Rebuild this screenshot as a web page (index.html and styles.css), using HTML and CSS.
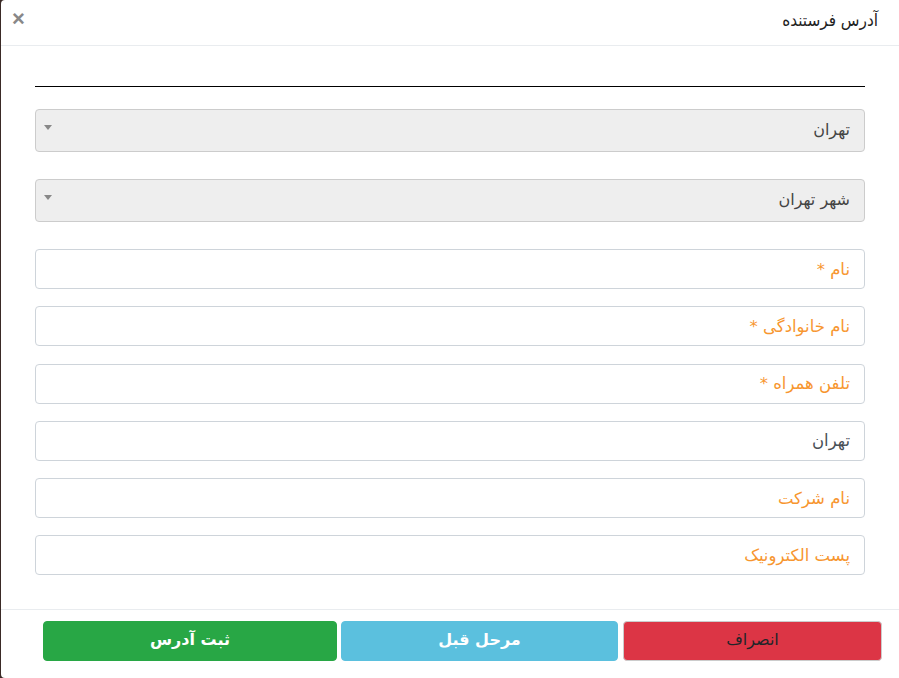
FILE: index.html
```html
<!DOCTYPE html>
<html lang="fa" dir="rtl">
<head>
<meta charset="utf-8">
<title>آدرس فرستنده</title>
<link rel="stylesheet" href="styles.css">
</head>
<body>
<div class="modal">
  <div class="modal-header">
    <h5 class="modal-title">آدرس فرستنده</h5>
    <span class="close">×</span>
  </div>
  <div class="modal-body">
    <div class="rule"></div>
    <div class="select"><span>تهران</span><i class="caret"></i></div>
    <div class="select"><span>شهر تهران</span><i class="caret"></i></div>
    <div class="field placeholder">نام *</div>
    <div class="field placeholder">نام خانوادگی *</div>
    <div class="field placeholder">تلفن همراه *</div>
    <div class="field">تهران</div>
    <div class="field placeholder">نام شرکت</div>
    <div class="field placeholder">پست الکترونیک</div>
  </div>
  <div class="modal-footer">
    <button class="btn btn-red">انصراف</button>
    <button class="btn btn-blue">مرحل قبل</button>
    <button class="btn btn-green">ثبت آدرس</button>
  </div>
</div>
</body>
</html>
```
FILE: styles.css
```css
html, body {
  margin: 0;
  padding: 0;
  height: 100%;
}
body {
  background: #3a2a26;
  font-family: "DejaVu Sans", "Noto Sans", sans-serif;
  overflow: hidden;
}
.modal {
  margin-left: 1px;
  width: 898px;
  height: 678px;
  background: #fff;
  border-radius: 4px 0 0 4px;
  box-sizing: border-box;
  display: flex;
  flex-direction: column;
}
.modal-header {
  height: 46px;
  box-sizing: border-box;
  border-bottom: 1px solid #e9ecef;
  display: flex;
  align-items: center;
  justify-content: space-between;
  padding: 0 21px 0 11px;
}
.modal-title {
  margin: 0;
  font-weight: normal;
  font-size: 17px;
  color: #222;
  font-family: "DejaVu Sans Condensed", "DejaVu Sans", sans-serif;
  position: relative;
  top: -3px;
}
.close {
  font-size: 22px;
  font-weight: bold;
  color: #888;
  line-height: 1;
  position: relative;
  top: -4px;
  font-family: "Liberation Sans", sans-serif;
}
.modal-body {
  padding: 40px 34px 0 34px;
  flex: 1;
  display: flex;
  flex-direction: column;
}
.rule {
  height: 0;
  border-top: 1.5px solid #000;
  margin-bottom: 22px;
}
.select {
  height: 43px;
  box-sizing: border-box;
  background: #eee;
  border: 1px solid #ccc;
  border-radius: 4px;
  display: flex;
  align-items: center;
  justify-content: space-between;
  padding: 0 14px 0 8px;
  margin-bottom: 27px;
  font-size: 16px;
  color: #444;
}
.select span {
  position: relative;
  top: -1px;
}
.caret {
  width: 0;
  height: 0;
  border-left: 4px solid transparent;
  border-right: 4px solid transparent;
  border-top: 5px solid #888;
  position: relative;
  top: -3px;
}
.field {
  height: 40px;
  box-sizing: border-box;
  border: 1px solid #ced4da;
  border-radius: 4px;
  display: flex;
  align-items: center;
  padding: 0 14px;
  margin-bottom: 17.25px;
  font-size: 16.5px;
  color: #495057;
}
.placeholder {
  color: #f7962f;
}
.modal-footer {
  border-top: 1px solid #e9ecef;
  height: 69px;
  box-sizing: border-box;
  display: flex;
  align-items: flex-start;
  padding: 11px 17px 0 42px;
}
.btn {
  height: 40px;
  border: 1px solid transparent;
  border-radius: 4px;
  font-family: "DejaVu Sans", sans-serif;
  font-size: 16px;
  color: #fff;
  padding: 0 0 4px;
}
.btn-red {
  width: 259px;
  background: #dc3545;
  border-color: #ccc;
  color: #212529;
}
.btn-blue {
  width: 277px;
  margin-right: 5px;
  background: #5bc0de;
  border-color: #5bc0de;
  font-weight: bold;
}
.btn-green {
  width: 294px;
  margin-right: 4px;
  background: #28a745;
  border-color: #28a745;
  font-weight: bold;
}
```
